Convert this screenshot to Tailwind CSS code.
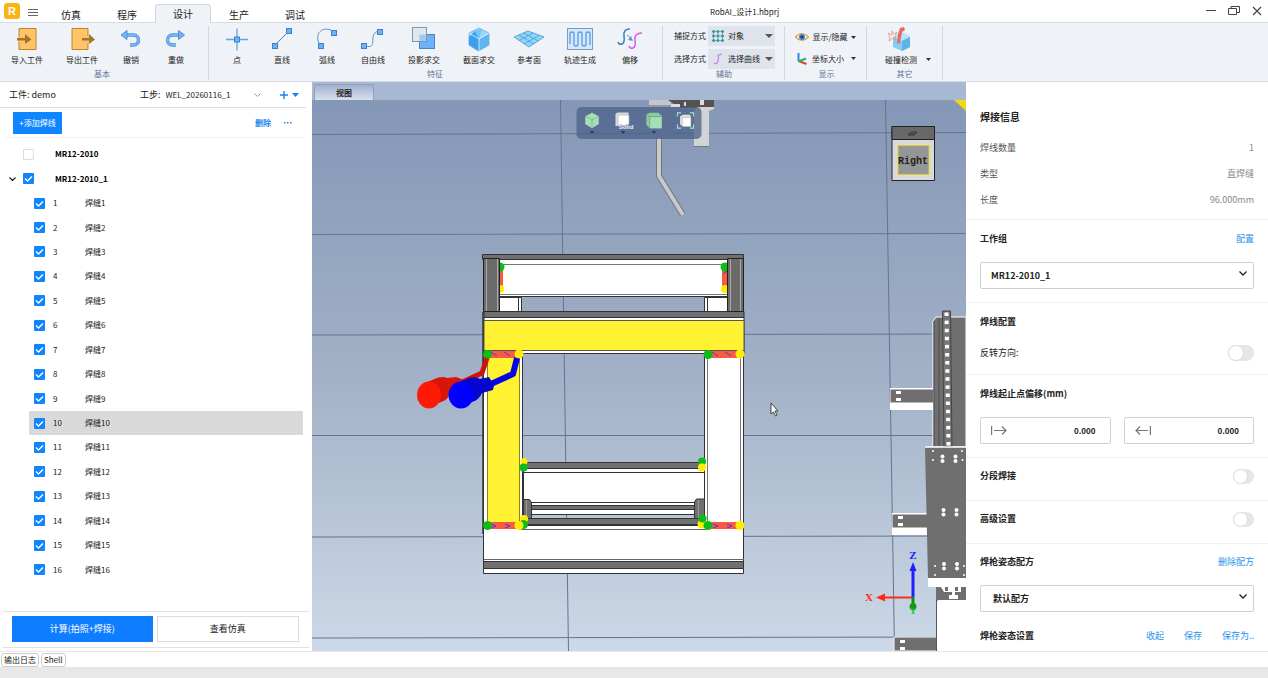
<!DOCTYPE html>
<html lang="zh-CN">
<head>
    <meta charset="UTF-8">
    <meta name="viewport" content="width=device-width, initial-scale=1.0">
    <title>RobAI_设计1.hbprj</title>
    <script src="https://cdn.jsdelivr.net/npm/@tailwindcss/browser@4"></script>
</head>
<body class="flex h-screen flex-col overflow-hidden bg-white font-['Noto_Sans_CJK_SC',sans-serif] text-[8px] leading-3 text-[#222]">

    <!-- Title bar -->
    <header class="flex h-[23px] shrink-0 items-end border-b border-[#d5dce6]">
        <div class="flex h-full w-[43px] items-center gap-2 pl-1">
            <svg class="size-4" viewBox="0 0 16 16">
                <rect width="16" height="16" rx="3" fill="#f8b414"/>
                <text x="8" y="12" text-anchor="middle" font-family="Liberation Sans" font-weight="bold" font-size="11" fill="#fff">R</text>
            </svg>
            <button class="pt-1" aria-label="菜单">
                <svg class="size-[10px]" viewBox="0 0 10 10" stroke="#666" stroke-width="1"><path d="M0 1.500h10M0 4.500h10M0 7.500h10"/></svg>
            </button>
        </div>
        <nav class="flex text-[10px]">
            <button class="h-[18px] w-14 pt-1">仿真</button>
            <button class="h-[18px] w-14 pt-1">程序</button>
            <button class="-mb-px h-[19px] w-14 rounded-t border border-b-0 border-[#ccd5e2] bg-[#eff2f7]">设计</button>
            <button class="h-[18px] w-14 pt-1">生产</button>
            <button class="h-[18px] w-14 pt-1">调试</button>
        </nav>
        <h1 class="h-full flex-1 pt-[6px] pr-10 text-center text-[8px]">RobAI_设计1.hbprj</h1>
        <div class="flex h-full items-center gap-3 pr-[6px]">
            <button aria-label="最小化"><svg class="size-[10px]" viewBox="0 0 10 10" stroke="#444"><path d="M0 4.500h10"/></svg></button>
            <button aria-label="还原"><svg class="h-[10px] w-3" viewBox="0 0 12 10" fill="none" stroke="#444"><path d="M.5 2.500h8v6h-8zM3 2.500V.5h8.500v6H9"/></svg></button>
            <button aria-label="关闭"><svg class="size-[10px]" viewBox="0 0 10 10" stroke="#444" stroke-width="1.200"><path d="M1 1l8 8M9 1L1 9"/></svg></button>
        </div>
    </header>

    <!-- Ribbon -->
    <div class="flex h-[59px] shrink-0 items-start border-b border-[#d5dce6] bg-[#eff2f7] pt-[3px]">
        <section class="w-[208px] text-center">
            <div class="flex">
                <button class="flex w-[54px] flex-col items-center gap-[2px]">
                    <svg class="size-[26px]" viewBox="0 0 26 26">
                        <path d="M5 2.500h17v21H5z" fill="#ffc468" stroke="#b8862f"/><path d="M4 11h4v5H4z" fill="#ffc468"/>
                        <path d="M3 12h8V8l6.500 5.500L11 18v-3.500H3z" fill="#a3752a"/>
                    </svg>
                    导入工件
                </button>
                <button class="flex w-[56px] flex-col items-center gap-[2px]">
                    <svg class="size-[26px]" viewBox="0 0 26 26">
                        <path d="M3 2.500h16v21H3z" fill="#ffc468" stroke="#b8862f"/><path d="M17 10h4v7h-4z" fill="#ffc468"/>
                        <path d="M13 12h7V8l6 5.500-6 4.500v-3.500h-7z" fill="#a3752a"/>
                    </svg>
                    导出工件
                </button>
                <button class="flex w-[42px] flex-col items-center gap-[2px]">
                    <svg class="size-[26px]" viewBox="0 0 26 26" fill="none">
                        <path d="M9 9h6.500a5 5 0 0 1 0 10H12" stroke="#4b91dc" stroke-width="3.500"/><path d="M9 9h6.500a5 5 0 0 1 0 10H12" stroke="#78b4f3" stroke-width="2.200"/>
                        <path d="M3 9l6-4.500v9z" fill="#78b4f3" stroke="#4b91dc"/>
                    </svg>
                    撤销
                </button>
                <button class="flex w-[48px] flex-col items-center gap-[2px]">
                    <svg class="size-[26px]" viewBox="0 0 26 26" fill="none">
                        <path d="M16 9H9.500a5 5 0 0 0 0 10H13" stroke="#4b91dc" stroke-width="3.500"/><path d="M16 9H9.500a5 5 0 0 0 0 10H13" stroke="#78b4f3" stroke-width="2.200"/>
                        <path d="M21.500 9l-6-4.500v9z" fill="#78b4f3" stroke="#4b91dc"/>
                    </svg>
                    重做
                </button>
            </div>
            <p class="mt-[2px] pr-1 text-[#5f7596]">基本</p>
        </section>

        <section class="w-[454px] border-l border-[#d3d9e3] pl-[5px] text-center">
            <div class="flex">
                <button class="flex w-[46px] flex-col items-center gap-[2px]">
                    <svg class="size-[26px]" viewBox="0 0 26 26"><path d="M2 13.500h22M13 2.500v22" stroke="#62a3e6" stroke-width="1.300"/><rect x="10.500" y="11" width="5" height="5" fill="#6db1f7" stroke="#3d82c9"/></svg>
                    点
                </button>
                <button class="flex w-[44px] flex-col items-center gap-[2px]">
                    <svg class="size-[26px]" viewBox="0 0 26 26"><path d="M5 20L20 5" stroke="#4a83c0"/><g fill="#6db1f7" stroke="#3d82c9"><rect x="3.500" y="17.500" width="5" height="5"/><rect x="17.500" y="2.500" width="5" height="5"/></g></svg>
                    直线
                </button>
                <button class="flex w-[46px] flex-col items-center gap-[2px]">
                    <svg class="size-[26px]" viewBox="0 0 26 26"><path d="M6 19C-1 8 9-2 20 6" fill="none" stroke="#5c94cf"/><g fill="#6db1f7" stroke="#3d82c9"><rect x="4.500" y="17.500" width="5" height="5"/><rect x="17.500" y="4.500" width="5" height="5"/></g></svg>
                    弧线
                </button>
                <button class="flex w-[46px] flex-col items-center gap-[2px]">
                    <svg class="size-[26px]" viewBox="0 0 26 26"><path d="M5 20c15 4 1-14 15-15" fill="none" stroke="#5c94cf"/><g fill="#6db1f7" stroke="#3d82c9"><rect x="1.500" y="17.500" width="5" height="5"/><rect x="17.500" y="3.500" width="5" height="5"/></g></svg>
                    自由线
                </button>
                <button class="flex w-[56px] flex-col items-center gap-[2px]">
                    <svg class="size-[26px]" viewBox="0 0 26 26"><rect x="8.500" y="8.500" width="15" height="14" fill="#6db1f7" stroke="#4386cc"/><rect x="1.500" y="1.500" width="14" height="14" fill="#d8e8ee" fill-opacity=".85" stroke="#7f98ad"/><path d="M9 9h6v6H9z" fill="#a0cbed"/></svg>
                    投影求交
                </button>
                <button class="flex w-[54px] flex-col items-center gap-[2px]">
                    <svg class="size-[26px]" viewBox="0 0 26 26"><path d="M3 7l10-5 10 5v12l-11 6-9-6z" fill="#9bd9f8" stroke="#69a9d4" stroke-width=".8"/><path d="M3 11l6-6 4 8v12l-10-6z" fill="#3d9fee"/><path d="M9 5l7-2-3 10z" fill="#73c4f7"/><path d="M13 13l10-5v11l-10 6z" fill="#5fb6f4"/><path d="M3 7l10 6 10-6M13 13v12" fill="none" stroke="#e0f5ff" stroke-width=".8"/></svg>
                    截面求交
                </button>
                <button class="flex w-[46px] flex-col items-center gap-[2px]">
                    <svg class="h-[26px] w-[30px]" viewBox="0 0 30 26"><path d="M0 11l14-6 16 6-15 10z" fill="#8ed4fb" stroke="#5ca6d9"/><path d="M5 9l15 9M9.500 7l15 8M5 14.500l14-7.500M10 18l15-8.500" stroke="#4a9cd4" stroke-width=".8"/></svg>
                    参考面
                </button>
                <button class="flex w-[56px] flex-col items-center gap-[2px]">
                    <svg class="size-[26px]" viewBox="0 0 26 26" fill="none"><rect x=".5" y="2.500" width="25" height="21" fill="#d5e7f8" stroke="#7a9cbe"/><path d="M3 18V8a2 2 0 0 1 4 0v10a2 2 0 0 0 4 0V8a2 2 0 0 1 4 0v10a2 2 0 0 0 4 0V8a2 2 0 0 1 4 0v11" stroke="#559ee5" stroke-width="1.300"/></svg>
                    轨迹生成
                </button>
                <button class="flex w-[44px] flex-col items-center gap-[2px]">
                    <svg class="size-[26px]" viewBox="0 0 26 26" fill="none"><path d="M1 16q1 3 4 2t2-8 6-7" stroke="#3b7fc2" stroke-width="1.500"/><path d="M12 20q1 3 4 2t2-8 7-7" stroke="#d85be8" stroke-width="1.500"/><path d="M10 9l4 3" stroke="#5b9ad8"/><path d="M16 15l-5-1 3-4z" fill="#5b9ad8"/></svg>
                    偏移
                </button>
            </div>
            <p class="mt-[2px] pr-[6px] text-[#5f7596]">特征</p>
        </section>

        <section class="w-[122px] border-l border-[#d3d9e3] pl-[11px]">
            <div class="flex items-center gap-[2px]">
                <label for="snap" class="w-8">捕捉方式</label>
                <div class="relative h-5 w-[67px]">
                    <select id="snap" class="h-full w-full appearance-none bg-[#dfe4ec] pl-5"><option>对象</option></select>
                    <svg class="pointer-events-none absolute top-1 left-1 size-3" viewBox="0 0 12 12" stroke="#36969c" fill="#2c8f96"><path d="M1.500 0v12M6 0v12M10.500 0v12M0 1.500h12M0 6h12M0 10.500h12" stroke-width=".7"/><path d="M.8.800h1.500v1.500H.8zM5.200.800h1.500v1.500H5.200zM9.800.800h1.500v1.500H9.800zM.8 5.200h1.500v1.500H.8zM5.200 5.200h1.500v1.500H5.200zM9.800 5.200h1.500v1.500H9.800zM.8 9.800h1.500v1.500H.8zM5.200 9.800h1.500v1.500H5.200zM9.800 9.800h1.500v1.500H9.800z"/></svg>
                    <svg class="pointer-events-none absolute top-2 right-[2px] h-1 w-2" viewBox="0 0 8 4"><path d="M0 0h8L4 4z" fill="#555"/></svg>
                </div>
            </div>
            <div class="mt-[3px] flex items-center gap-[2px]">
                <label for="pick" class="w-8">选择方式</label>
                <div class="relative h-5 w-[67px]">
                    <select id="pick" class="h-full w-full appearance-none bg-[#dfe4ec] pl-5"><option>选择曲线</option></select>
                    <svg class="pointer-events-none absolute top-1 left-1 size-3" viewBox="0 0 12 12" fill="none"><path d="M2 10q3 2 4-2t0-5 4-2" stroke="#c77be0" stroke-width="1.100"/></svg>
                    <svg class="pointer-events-none absolute top-2 right-[2px] h-1 w-2" viewBox="0 0 8 4"><path d="M0 0h8L4 4z" fill="#555"/></svg>
                </div>
            </div>
            <p class="-mt-px pr-[10px] text-center text-[#5f7596]">辅助</p>
        </section>

        <section class="w-[82px] border-l border-[#d3d9e3] pl-[10px]">
            <button class="flex h-[22px] items-center gap-[3px]">
                <svg class="h-3 w-[14px]" viewBox="0 0 14 12"><path d="M.5 6Q7-1 13.500 6 7 13 .5 6z" fill="#fff8e8" stroke="#d6a143" stroke-width="1.200"/><circle cx="7" cy="6" r="3" fill="#3b7dc9"/><circle cx="7" cy="6" r="1.300" fill="#1d3658"/></svg>
                <span class="w-9">显示/隐藏</span>
                <svg class="h-[3px] w-[5px]" viewBox="0 0 5 3"><path d="M0 0h5L2.500 3z" fill="#333"/></svg>
            </button>
            <button class="flex h-[21px] items-center gap-[3px]">
                <svg class="h-3 w-[14px]" viewBox="0 0 14 12" fill="none"><path d="M3.500 0v8" stroke="#2e86e8" stroke-width="2"/><path d="M3.500 8l8 3" stroke="#e04037" stroke-width="2"/><path d="M3.500 8.500L11 5.500" stroke="#27b567" stroke-width="2"/></svg>
                <span class="w-9 text-left">坐标大小</span>
                <svg class="h-[3px] w-[5px]" viewBox="0 0 5 3"><path d="M0 0h5L2.500 3z" fill="#333"/></svg>
            </button>
            <p class="-mt-px pr-2 text-center text-[#5f7596]">显示</p>
        </section>

        <section class="w-[77px] border-x border-[#d3d9e3] text-center">
            <div class="flex items-end">
                <button class="ml-[11px] flex w-[46px] flex-col items-center gap-[2px]">
                    <svg class="size-[26px]" viewBox="0 0 26 26"><path d="M5 11l9-5 8 5v10l-8 4-9-4z" fill="#86cdf3"/><path d="M5 11l9-5 8 5-8 4z" fill="#b7e4fa"/><path d="M14 15l8-4v10l-8 4z" fill="#5eb2e5"/><path d="M12 2l4-1 1 3-3 2-2 11-3 1 1-10z" fill="#e86a5e"/><path d="M0 7l4 2 0-4 2 3 3-2-2 4 1 4-3-2-4 3 1-4z" fill="none" stroke="#f28b80" stroke-width=".8"/></svg>
                    碰撞检测
                </button>
                <button class="mb-[5px] ml-[2px]" aria-label="更多碰撞检测"><svg class="h-[3px] w-[5px]" viewBox="0 0 5 3"><path d="M0 0h5L2.500 3z" fill="#333"/></svg></button>
            </div>
            <p class="mt-[2px] text-[#5f7596]">其它</p>
        </section>
    </div>

    <main class="flex min-h-0 flex-1">
        <!-- Weld list -->
        <aside class="flex w-[312px] shrink-0 flex-col">
            <div class="mr-[6px] flex h-[26px] shrink-0 items-center border-b border-[#ddd] pl-[9px] text-[9px]">
                <span class="w-[131px]">工件: demo</span>
                <label for="step">工步:</label>
                <select id="step" class="ml-[5px] w-[82px] appearance-none bg-transparent text-[8px]"><option>WEL_20260116_1</option></select>
                <svg class="ml-[6px] h-1 w-[7px]" viewBox="0 0 7 4" fill="none" stroke="#999"><path d="M.5.500l3 3 3-3"/></svg>
                <button class="ml-[19px] flex items-center gap-1" aria-label="新建工步">
                    <svg class="size-2" viewBox="0 0 8 8" stroke="#1683ee" stroke-width="1.400"><path d="M0 4h8M4 0v8"/></svg>
                    <svg class="mt-px h-1 w-[7px]" viewBox="0 0 7 4"><path d="M0 0h7L3.500 4z" fill="#1683ee"/></svg>
                </button>
            </div>
            <div class="mr-2 ml-[6px] flex h-[30px] shrink-0 items-center border-b border-[#f0f0f0] pl-[7px]">
                <button class="h-[22px] w-[49px] bg-[#0f86ff] text-white">+添加焊线</button>
                <button class="ml-auto font-bold text-[#1683ee]">删除</button>
                <button class="mr-3 ml-[13px] text-[#1683ee]" aria-label="更多"><svg class="h-[2px] w-2" viewBox="0 0 8 2" fill="#1683ee"><path d="M0 0h1.500v1.500H0zM3 0h1.500v1.500H3zM6 0h1.500v1.500H6z"/></svg></button>
            </div>
            <ul id="weldList" class="flex flex-1 flex-col pt-1 pr-[9px] pb-[29px]">
                <li class="flex min-h-0 flex-1 items-center pl-[23px] font-bold text-black">
                    <input id="g1" type="checkbox" class="size-[11px] appearance-none rounded-[1px] border border-[#ddd]">
                    <label for="g1" class="ml-[21px]">MR12-2010</label>
                </li>
                <li class="flex min-h-0 flex-1 items-center pl-[9px] font-bold text-black">
                    <button aria-label="收起分组"><svg class="h-1 w-[7px]" viewBox="0 0 7 4" fill="none" stroke="#222" stroke-width="1.200"><path d="M.5.500l3 3 3-3"/></svg></button>
                    <span class="relative ml-[7px] flex">
                        <input id="g2" type="checkbox" checked class="size-[11px] appearance-none rounded-[1px] bg-[#0f86ff]">
                        <svg class="pointer-events-none absolute inset-0 size-[11px]" viewBox="0 0 11 11" fill="none" stroke="#fff" stroke-width="1.400"><path d="M2 5.500l2.500 2.500L9 3.500"/></svg>
                    </span>
                    <label for="g2" class="ml-[21px]">MR12-2010_1</label>
                </li>
            </ul>
            <div class="mx-[3px] flex h-[37px] shrink-0 gap-1 border-y border-[#e2e2e2] pt-1 pr-[10px] pb-[5px] pl-[9px] text-[9px]">
                <button class="flex-1 bg-[#0f7dff] text-white">计算(拍照+焊接)</button>
                <button class="flex-1 border border-[#ddd]">查看仿真</button>
            </div>
            <div class="h-[3px] shrink-0"></div>
        </aside>

        <!-- 3D view -->
        <section class="flex min-w-0 flex-1 flex-col">
            <div class="flex h-[18px] shrink-0 items-end bg-[#a9b8d2] pl-[2px]">
                <button class="h-4 w-[60px] rounded-t-[2px] border border-b-0 border-[#8fa0be] bg-linear-to-b from-[#a0b1cd] to-[#d8e0ec] font-bold">视图</button>
            </div>
            <div class="relative min-h-0 flex-1 bg-linear-to-b from-[#8497b6] via-[#a2b1c7] to-[#ccd9e8]">
                <svg class="absolute inset-0 h-full w-full" viewBox="312 100 654 551" preserveAspectRatio="xMidYMid slice">
                    <!-- floor grid -->
                    <g stroke="#64758f" stroke-width="1">
                        <path d="M312 134.500l654-2M312 234.500l654-1M312 335l654-1M312 435.500h654M312 537l654-1M312 638l654-1M560.500 100l8 551M885.500 100l9 551"/>
                    </g>

                    <!-- robot head -->
                    <path d="M648 100h23v30q-4 8-12 8t-9-8z" fill="#8d99ab"/>
                    <path d="M649 100h22v5h-22z" fill="#c4c6ca"/>
                    <path d="M668 100h46v8h-34z" fill="#55534f"/>
                    <path d="M671 104h9v3h-9zM684 102h2v4h-2zM700 100h4v5h-4z" fill="#dcdcdc"/>
                    <path d="M697 107h17v2l-5 2v36h-15v-36z" fill="#d2d3d4"/>
                    <path d="M694 146.500h15" stroke="#777"/>
                    <path d="M659 138v38l24 39" fill="none" stroke="#72767c" stroke-width="6"/>
                    <path d="M659 138v38l24 39" fill="none" stroke="#c9cacc" stroke-width="4"/>
                    <path d="M954 100h12v11z" fill="#f5d90f"/>

                    <!-- rail and column on the right -->
                    <g>
                        <path d="M936 586h30v65h-30z" fill="#fff"/>
                        <path d="M933 321l3-4h30v130h-33z" fill="#6f6f6f" stroke="#fff"/>
                        <path d="M934 321v126M939 318v128" stroke="#4f4f4f"/>
                        <path d="M942.500 311h8l1.500 136h-8z" fill="#757575" stroke="#444"/>
                        <path d="M946.500 312.500l2 133" stroke="#fff" stroke-width="4" stroke-dasharray="3.500 4.600"/>
                        <path d="M890 388h43v22h-43z" fill="#fff"/><path d="M890.500 389.500h43v13h-43z" fill="#6f6f6f"/>
                        <path d="M892 513h35v22h-35z" fill="#fff"/><path d="M892.500 514.500h35v13h-35z" fill="#6f6f6f"/>
                        <path d="M894 637h43v14h-43z" fill="#6f6f6f" stroke="#fff"/>
                        <path d="M925 447h41v131h-38z" fill="#6f6f6f"/><path d="M925 447h41" stroke="#fff" stroke-width="1.500"/>
                        <path d="M928 578h38v9h-38z" fill="#fff"/>
                        <path d="M936 587h30v13h-28l-2 3z" fill="#6f6f6f"/>
                        <path d="M936.500 600v51" stroke="#555"/>
                        <path d="M941 587h4v4h3v-4h7v4h3v-4h3v5h-6v3h3v4h-9v-4h3v-3h-8z" fill="#fff"/>
                        <g fill="#fff">
                            <path d="M896 391h5v3h-5zM896 398h5v3h-5zM898 516h5v3h-5zM898 523h5v3h-5zM900 640h5v3h-5zM900 647h5v3h-5z"/>
                            <circle cx="942.500" cy="456.500" r="2"/><circle cx="942.500" cy="461" r="2"/><circle cx="955.500" cy="456.500" r="2"/><circle cx="955.500" cy="461" r="2"/>
                            <circle cx="943.500" cy="510" r="2"/><circle cx="943.500" cy="514.500" r="2"/><circle cx="956.500" cy="510" r="2"/><circle cx="956.500" cy="514.500" r="2"/>
                            <circle cx="944" cy="564" r="2"/><circle cx="944" cy="568.500" r="2"/><circle cx="957" cy="564" r="2"/><circle cx="957" cy="568.500" r="2"/>
                            <circle cx="933" cy="451" r="1"/><circle cx="962" cy="451" r="1"/><circle cx="933" cy="460" r="1"/><circle cx="962.500" cy="460" r="1"/>
                            <circle cx="935" cy="566" r="1"/><circle cx="964" cy="566" r="1"/><circle cx="935" cy="575" r="1"/><circle cx="964" cy="575" r="1"/>
                        </g>
                    </g>

                    <!-- workpiece frame -->
                    <g stroke="#333" stroke-width="1">
                        <path d="M499.500 297.500h22v14h-22zM704.500 297.500h23v14h-23z" fill="#fff"/>
                        <path d="M518.500 298v13M707.500 298v13"/>
                        <path d="M499.500 259.500h228v37h-228z" fill="#fff"/>
                        <path d="M500 264.500h227M500 294.500h227" stroke="#777"/>
                        <path d="M482.500 254.500h261v5h-261z" fill="#707070"/>
                        <path d="M523.500 462.500h181v6h-181z" fill="#707070"/>
                        <path d="M523.500 468.500h181v34h-181z" fill="#fff"/>
                        <path d="M524 472.500h180"/>
                        <path d="M530.500 502.500h165v12h-165z" fill="#fff"/>
                        <path d="M530.500 505.500h165v4h-165z" fill="#707070"/>
                        <path d="M523.500 499.500h6l2 3v17h-8zM694.500 502l2-3h8v20h-10z" fill="#707070"/>
                        <path d="M526.500 500v19M698.500 500v19" stroke="#999"/>
                        <path d="M483.500 525.500h260v36h-260z" fill="#fff"/>
                        <path d="M523.500 518.500h181v6h-181z" fill="#707070"/>
                        <path d="M521 529.500h185M484 559.500h260" stroke="#666"/>
                        <path d="M483.500 561.500h260v7h-260z" fill="#707070"/>
                        <path d="M483.500 568.500h260v5h-260z" fill="#fff"/>
                        <path d="M483.500 350.500h39v175h-39zM704.500 350.500h39v175h-39z" fill="#fff"/>
                        <path d="M519.500 353v173M707.500 353v173M740.500 353v173" stroke="#777"/>
                        <path d="M487.500 353h32v170h-32z" fill="#fff233" stroke="#8a8423"/>
                        <path d="M484 311.500h260v6H484z" fill="#707070"/>
                        <path d="M484 317.500h260v36H484z" fill="#fff"/>
                        <path d="M484 320.500h260v30H484z" fill="#fff233" stroke="#555"/>
                        <path d="M483 312v222" stroke-width="1.500"/>
                    </g>
                    <!-- weld seams -->
                    <g fill="#fb5a42">
                        <path d="M488 351h30v7h-30zM709 351h30v7h-30zM488 522h30v7h-30zM709 522h30v7h-30zM499 270h4v18h-4zM722 270h5v18h-5z"/>
                        <path d="M491 352l6 4M504 352l6 4M712 352l6 4M725 352l6 4M491 524l5 2-5 2M505 524l5 2-5 2M713 524l5 2-5 2M727 524l5 2-5 2M723 274l4-3" fill="none" stroke="#4a3fc0"/>
                    </g>
                    <g fill="#ffee00">
                        <circle cx="524" cy="461.500" r="3.500"/><circle cx="524" cy="519" r="4"/><circle cx="702" cy="524" r="4.500"/>
                        <circle cx="500" cy="289" r="4"/><circle cx="725" cy="289" r="4"/>
                    </g>
                    <g fill="#0bbd17">
                        <circle cx="702" cy="461.500" r="4"/><circle cx="523.500" cy="467.500" r="4"/><circle cx="523.500" cy="524.500" r="4.500"/><circle cx="702.500" cy="518.500" r="4"/>
                        <circle cx="500" cy="267" r="4.500"/><circle cx="725" cy="267" r="4.500"/>
                        <circle cx="487.500" cy="354.500" r="4.500"/><circle cx="708" cy="354.500" r="4.500"/><circle cx="487.500" cy="525.500" r="4.500"/><circle cx="708" cy="525.500" r="4.500"/>
                    </g>
                    <g fill="#ffee00">
                        <circle cx="519" cy="354" r="4.500"/><circle cx="740" cy="354" r="4.500"/><circle cx="519" cy="525.500" r="4.500"/><circle cx="740" cy="525.500" r="4.500"/><circle cx="702" cy="467.500" r="4"/>
                    </g>
                    <!-- grey posts -->
                    <path d="M483.500 258.500h16v53h-16zM727.500 258.500h16v53h-16z" fill="#6b6b6b" stroke="#222"/>
                    <path d="M486.500 259v52M497.500 259v52M730.500 259v52M740.500 259v52" stroke="#aaa"/>

                    <!-- torches -->
                    <path d="M487 358l-5 15-22 10" fill="none" stroke="#cf1208" stroke-width="5" stroke-linejoin="round"/>
                    <path d="M425 383l12-5q6-2 10 0l9-1 8 3v7l-14 6q-2 7-9 9l-12 5z" fill="#d8150a"/>
                    <ellipse cx="429" cy="395" rx="12" ry="13.500" fill="#ff1a08"/>
                    <path d="M517 358l-4 16-22 10" fill="none" stroke="#0505e6" stroke-width="6" stroke-linejoin="round"/>
                    <path d="M457 383l12-5q7-2 11 1l9-2 5 8-1 5-11 3q-3 7-10 9l-10 6z" fill="#0606ce"/>
                    <ellipse cx="461" cy="395" rx="12.500" ry="13.500" fill="#0000ff"/>

                    <!-- view cube -->
                    <path d="M892 126.500h42.500v54H892z" fill="#dadada" stroke="#222"/>
                    <path d="M892 126.500h42.500v13H892z" fill="#686868" stroke="#222"/>
                    <path d="M908 135l3-3h6l-3 3zM910 134h5" fill="none" stroke="#222" stroke-width=".7"/>
                    <path d="M898 145.500h31v29h-31z" fill="#969696" stroke="#ded21e"/>
                    <text x="913" y="163.500" text-anchor="middle" font-family="Liberation Mono" font-weight="bold" font-size="10" fill="#222">Right</text>

                    <!-- axes -->
                    <path d="M913 597v-26" stroke="#1b22ff" stroke-width="3"/><path d="M909.500 571l3.500-9 3.500 9z" fill="#1b22ff"/>
                    <path d="M913 597.500h-30" stroke="#ff2a1a" stroke-width="2"/><path d="M885 593.500l-9 4 9 4z" fill="#ff2a1a"/>
                    <path d="M913 597v10" stroke="#118a18" stroke-width="3"/><circle cx="913" cy="606.500" r="3.500" fill="#109c18"/>
                    <g font-family="Liberation Serif" font-weight="bold" text-anchor="middle">
                        <text x="913" y="559" font-size="11" fill="#1b22ff">Z</text>
                        <text x="869" y="601" font-size="11" fill="#ff2a1a">X</text>
                        <text x="913" y="614" font-size="9" fill="#17c522">Y</text>
                    </g>

                    <!-- cursor -->
                    <path d="M771 403v11l2.500-2 2 4 1.500-1-2-4h3z" fill="#fff" stroke="#222" stroke-width=".8"/>
                </svg>

                <div class="absolute top-[7px] left-1/2 flex h-8 w-[125px] -translate-x-1/2 justify-around rounded-[5px] bg-[#4b6189]/75 pt-[5px]">
                    <button class="flex flex-col items-center gap-[2px]" aria-label="视角">
                        <svg class="size-[17px]" viewBox="0 0 20 20"><path d="M2 5l8-4 8 4v9l-8 5-8-5z" fill="#a5dfb5"/><path d="M2 5l8 4 8-4M10 9v10" fill="none" stroke="#6aa87c" stroke-dasharray="2 1"/></svg>
                        <svg class="h-[3px] w-[5px]" viewBox="0 0 5 3"><path d="M0 0h5L2.500 3z" fill="#2f3e5c"/></svg>
                    </button>
                    <button class="flex flex-col items-center gap-[2px]" aria-label="显示模式">
                        <svg class="size-[17px] overflow-visible" viewBox="0 0 17 17"><path d="M1 2l2-1.500h11V12l-2 2H1z" fill="#ddd"/><path d="M3.500 3h11v11h-11z" fill="#fff" stroke="#a5a5a5" stroke-width=".6"/><text x="11.500" y="16.500" text-anchor="middle" font-family="Liberation Sans" font-weight="bold" font-size="6" fill="#eef4ff" stroke="#60779c" stroke-width="1" paint-order="stroke">Solid</text></svg>
                        <svg class="h-[3px] w-[5px]" viewBox="0 0 5 3"><path d="M0 0h5L2.500 3z" fill="#2f3e5c"/></svg>
                    </button>
                    <button class="flex flex-col items-center gap-[2px]" aria-label="部件显示">
                        <svg class="size-[17px]" viewBox="0 0 20 20"><path d="M1 3l4-2h10l4 3v15H5l-4-4z" fill="#8dcaa0"/><path d="M5 5.500h14V19H5z" fill="#a5dfb5"/><path d="M1 3l4 2.500V19M5 5.500h14" fill="none" stroke="#5f9671" stroke-width=".7"/></svg>
                        <svg class="h-[3px] w-[5px]" viewBox="0 0 5 3"><path d="M0 0h5L2.500 3z" fill="#2f3e5c"/></svg>
                    </button>
                    <button class="flex flex-col items-center gap-[2px]" aria-label="适应窗口">
                        <svg class="size-[18px]" viewBox="0 0 20 20"><path d="M4 5l3-2h8l1 2v11H7l-3-2z" fill="#e2e2e2"/><path d="M6.500 6h9.500v10H6.500z" fill="#fff" stroke="#a8a8a8" stroke-width=".6"/><path d="M1 5V1h4M15 1h4v4M19 14v4h-4M5 18H1v-4" fill="none" stroke="#a5e8c0" stroke-width="1.300"/></svg>
                    </button>
                </div>
            </div>
        </section>

        <!-- Weld properties -->
        <aside class="w-[302px] shrink-0 overflow-hidden text-[9px] leading-5">
            <section class="border-b border-[#f0f0f0] px-[14px] pt-[25px] pb-[6px]">
                <h2 class="mb-2 text-[10px] leading-5 font-bold">焊接信息</h2>
                <dl class="leading-[26px] text-[#555]">
                    <div class="flex justify-between"><dt>焊线数量</dt><dd class="text-[#888]">1</dd></div>
                    <div class="flex justify-between"><dt>类型</dt><dd class="text-[#888]">直焊缝</dd></div>
                    <div class="flex justify-between"><dt>长度</dt><dd class="text-[#888]">96.000mm</dd></div>
                </dl>
            </section>
            <section class="border-b border-[#f0f0f0] px-[14px] pt-[9px] pb-[13px]">
                <div class="flex justify-between"><label for="group" class="font-bold">工作组</label><a href="#" class="text-[#2a93ee]">配置</a></div>
                <div class="relative mt-[13px]">
                    <select id="group" class="block h-[27px] w-full appearance-none rounded-[2px] border border-[#d0d0d0] pl-[10px] font-bold"><option>MR12-2010_1</option></select>
                    <svg class="pointer-events-none absolute top-[9px] right-[7px] h-[5px] w-2" viewBox="0 0 8 5" fill="none" stroke="#222" stroke-width="1.300"><path d="M.5.500L4 4 7.500.500"/></svg>
                </div>
            </section>
            <section class="border-b border-[#f0f0f0] px-[14px] pt-[9px] pb-[11px]">
                <h2 class="font-bold">焊线配置</h2>
                <div class="mt-[11px] flex items-center justify-between">
                    <label for="reverse">反转方向:</label>
                    <input id="reverse" type="checkbox" class="h-4 w-[26px] appearance-none rounded-full bg-[#e6e6e6] before:block before:size-4 before:rounded-full before:border before:border-[#ddd] before:bg-white">
                </div>
            </section>
            <section class="border-b border-[#f0f0f0] px-[14px] pt-[9px] pb-[13px]">
                <h2 class="font-bold">焊线起止点偏移(mm)</h2>
                <div class="mt-[13px] grid grid-cols-2 gap-[13px]">
                    <div class="flex h-[27px] items-center rounded-[2px] border border-[#d0d0d0] px-[10px]">
                        <svg class="h-[9px] w-4 shrink-0" viewBox="0 0 16 9" fill="none" stroke="#777" stroke-width="1.200"><path d="M.6 0v9M3 4.500h12M11 .5l4 4-4 4"/></svg>
                        <input type="text" value="0.000" aria-label="起点偏移" class="min-w-0 flex-1 pr-1 text-right text-[8px] font-bold">
                    </div>
                    <div class="flex h-[27px] items-center rounded-[2px] border border-[#d0d0d0] px-[10px]">
                        <svg class="h-[9px] w-4 shrink-0" viewBox="0 0 16 9" fill="none" stroke="#777" stroke-width="1.200"><path d="M15.400 0v9M13 4.500H1M5 .5l-4 4 4 4"/></svg>
                        <input type="text" value="0.000" aria-label="止点偏移" class="min-w-0 flex-1 pr-1 text-right text-[8px] font-bold">
                    </div>
                </div>
            </section>
            <section class="flex items-center justify-between border-b border-[#f0f0f0] px-[14px] pt-2 pb-[14px]">
                <label for="segment" class="font-bold">分段焊接</label>
                <input id="segment" type="checkbox" class="h-[15px] w-[21px] appearance-none rounded-full bg-[#e6e6e6] before:block before:size-[15px] before:rounded-full before:border before:border-[#ddd] before:bg-white">
            </section>
            <section class="flex items-center justify-between border-b border-[#f0f0f0] px-[14px] pt-2 pb-[14px]">
                <label for="advanced" class="font-bold">高级设置</label>
                <input id="advanced" type="checkbox" class="h-[15px] w-[21px] appearance-none rounded-full bg-[#e6e6e6] before:block before:size-[15px] before:rounded-full before:border before:border-[#ddd] before:bg-white">
            </section>
            <section class="px-[14px] pt-2">
                <div class="flex justify-between"><label for="recipe" class="font-bold">焊枪姿态配方</label><a href="#" class="text-[#2a93ee]">删除配方</a></div>
                <div class="relative mt-[13px]">
                    <select id="recipe" class="block h-[27px] w-full appearance-none rounded-[2px] border border-[#d0d0d0] pl-3 font-bold"><option>默认配方</option></select>
                    <svg class="pointer-events-none absolute top-[9px] right-[7px] h-[5px] w-2" viewBox="0 0 8 5" fill="none" stroke="#222" stroke-width="1.300"><path d="M.5.500L4 4 7.500.500"/></svg>
                </div>
                <div class="mt-[14px] flex gap-5">
                    <h2 class="mr-auto font-bold">焊枪姿态设置</h2>
                    <a href="#" class="text-[#2a93ee]">收起</a>
                    <a href="#" class="text-[#2a93ee]">保存</a>
                    <a href="#" class="text-[#2a93ee]">保存为..</a>
                </div>
            </section>
        </aside>
    </main>

    <!-- Status bar -->
    <footer class="shrink-0 border-b-[11px] border-[#e8e8e8]">
        <div class="flex h-4 items-center gap-[2px] border-t border-t-[#e8e8e8] pl-[1px]">
            <button class="h-[14px] rounded-[3px] border border-[#ccc] px-[2px]">输出日志</button>
            <button class="h-[14px] rounded-[3px] border border-[#ccc] px-[2px]">Shell</button>
        </div>
    </footer>

    <script>
        const list = document.getElementById("weldList");
        const selected = 10;

        for (let i = 1; i <= 16; i++) {
            const row = document.createElement("li");
            row.className = "ml-[29px] flex min-h-0 flex-1 items-center rounded-[1px] pl-[5px]";
            if (i === selected) row.classList.add("bg-[#d9d9d9]");
            row.innerHTML = `
                <span class="relative flex">
                    <input id="w${i}" type="checkbox" checked class="size-[11px] appearance-none rounded-[1px] bg-[#0f86ff]">
                    <svg class="pointer-events-none absolute inset-0 size-[11px]" viewBox="0 0 11 11" fill="none" stroke="#fff" stroke-width="1.400"><path d="M2 5.500l2.500 2.500L9 3.500"/></svg>
                </span>
                <span class="ml-2 w-[32px]">${i}</span>
                <label for="w${i}">焊缝${i}</label>`;
            list.appendChild(row);
        }
    </script>
</body>
</html>
